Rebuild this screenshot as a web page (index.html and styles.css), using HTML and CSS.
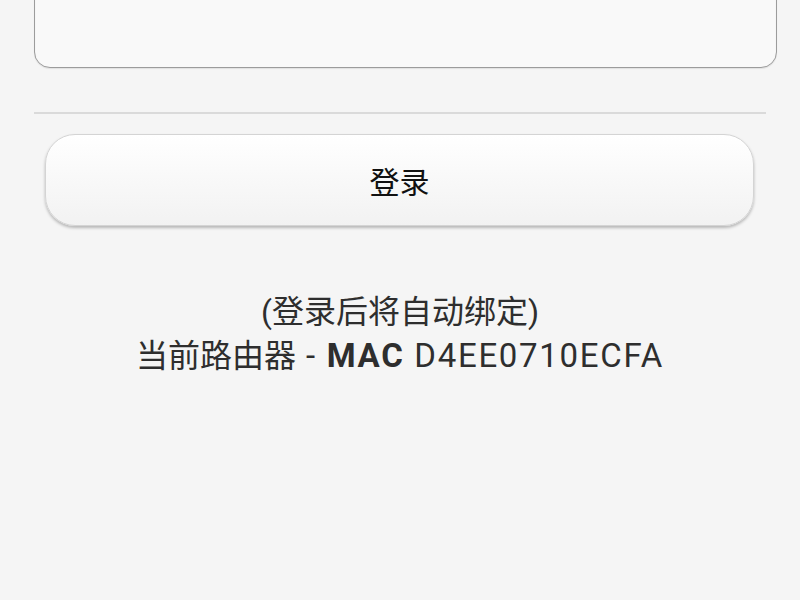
FILE: index.html
```html
<!DOCTYPE html>
<html lang="zh">
<head>
<meta charset="utf-8">
<link rel="stylesheet" href="styles.css">
</head>
<body>
<div class="page">
  <div class="field"></div>
  <div class="divider"></div>
  <button class="login">登录</button>
  <div class="info">
    <div class="line">(登录后将自动绑定)</div>
    <div class="line">当前路由器<span class="lat"> - <b>MAC</b> D4EE0710ECFA</span></div>
  </div>
</div>
</body>
</html>
```
FILE: styles.css
```css
html, body {
  margin: 0;
  padding: 0;
  background: #f5f5f5;
  height: 100%;
  overflow: hidden;
}
.page {
  display: flex;
  flex-direction: column;
  padding: 0 23px 0 34px;
  font-family: Roboto, "Noto Sans CJK SC", sans-serif;
  color: #333;
}
.field {
  margin-top: -40px;
  height: 106px;
  border: 1.5px solid #9c9c9c;
  border-radius: 16px;
  background: #f9f9f9;
  box-shadow: inset 0 1px 2px rgba(0,0,0,0.06), 0 1px 1px rgba(0,0,0,0.08);
}
.divider {
  margin: 44px 11px 0 0;
  height: 2px;
  background: #dadada;
}
.login {
  margin: 20px 23px 0 11px;
  height: 92px;
  border: 1px solid #d4d4d4;
  border-radius: 30px;
  background: linear-gradient(#ffffff, #f2f2f2);
  box-shadow: 0 2px 3px rgba(0,0,0,0.25);
  font-family: Roboto, "Noto Sans CJK SC", sans-serif;
  font-size: 30px;
  color: #111;
  padding: 0;
}
.info {
  margin-top: 64px;
  margin-right: -23px;
  margin-left: -34px;
  text-align: center;
  font-size: 32px;
  line-height: 44px;
  color: #2e2e2e;
}
.lat {
  font-size: 33px;
  letter-spacing: 1.7px;
}
.info b {
  font-weight: 700;
}
```
